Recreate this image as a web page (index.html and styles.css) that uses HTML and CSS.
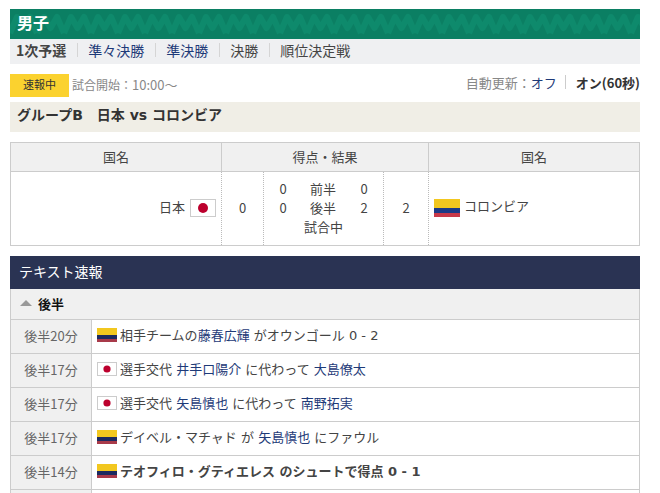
FILE: index.html
```html
<!DOCTYPE html>
<html>

<head>
    <title>男子</title>
    <meta charset='UTF-8'>
    <link rel="stylesheet" href="styles.css">
</head>

<body>
    <div class='page'>
        <h2 class='title'>男子</h2>
        <ul class='rounds'>
            <li class='current'>1次予選</li>
            <li><a>準々決勝</a></li>
            <li><a>準決勝</a></li>
            <li><a class='plain'>決勝</a></li>
            <li><a class='plain'>順位決定戦</a></li>
        </ul>
        <div class='status'>
            <span class='live'>速報中</span>
            <span class='start'>試合開始：<span class='time'>10:00～</span></span>
            <span class='refresh'>自動更新：<a>オフ</a><i class='sep'></i><b>オン(60秒)</b></span>
        </div>
        <div class='group'>グループB　日本 vs コロンビア</div>

        <table class='score'>
            <colgroup>
                <col class='c-team'>
                <col class='c-total'>
                <col class='c-halves'>
                <col class='c-total2'>
                <col>
            </colgroup>
            <tr>
                <th>国名</th>
                <th colspan='3'>得点・結果</th>
                <th>国名</th>
            </tr>
            <tr>
                <td class='home'>日本<svg class='flag jp' viewBox='0 0 26 18'><rect x='.5' y='.5' width='25' height='17' fill='#fff' stroke='#ccc'/><circle cx='13' cy='9' r='5' fill='#bc002d'/></svg></td>
                <td>0</td>
                <td>
                    <div class='half'><span>0</span><span>前半</span><span>0</span></div>
                    <div class='half'><span>0</span><span>後半</span><span>2</span></div>
                    <div>試合中</div>
                </td>
                <td>2</td>
                <td class='away'><svg class='flag' viewBox='0 0 26 18'><rect width='26' height='9' fill='#f2c71f'/><rect y='9' width='26' height='5' fill='#1c3a87'/><rect y='14' width='26' height='4' fill='#c8394a'/></svg>コロンビア</td>
            </tr>
        </table>

        <h3 class='bar'>テキスト速報</h3>
        <div class='section'><i class='arrow'></i>後半</div>
        <table class='log'>
            <tr>
                <th>後半20分</th>
                <td><svg class='flag small' viewBox='0 0 20 14'><rect width='20' height='7' fill='#f2c71f'/><rect y='7' width='20' height='4' fill='#1c2a60'/><rect y='11' width='20' height='3' fill='#a83a4a'/></svg>相手チームの<a>藤春広輝</a> がオウンゴール 0 - 2</td>
            </tr>
            <tr>
                <th>後半17分</th>
                <td><svg class='flag small' viewBox='0 0 20 14'><rect x='.5' y='.5' width='19' height='13' fill='#fff' stroke='#ccc'/><circle cx='10' cy='7' r='3.6' fill='#bc002d'/></svg>選手交代 <a>井手口陽介</a> に代わって <a>大島僚太</a></td>
            </tr>
            <tr>
                <th>後半17分</th>
                <td><svg class='flag small' viewBox='0 0 20 14'><rect x='.5' y='.5' width='19' height='13' fill='#fff' stroke='#ccc'/><circle cx='10' cy='7' r='3.6' fill='#bc002d'/></svg>選手交代 <a>矢島慎也</a> に代わって <a>南野拓実</a></td>
            </tr>
            <tr>
                <th>後半17分</th>
                <td><svg class='flag small' viewBox='0 0 20 14'><rect width='20' height='7' fill='#f2c71f'/><rect y='7' width='20' height='4' fill='#1c2a60'/><rect y='11' width='20' height='3' fill='#a83a4a'/></svg>デイベル・マチャド が <a>矢島慎也</a> にファウル</td>
            </tr>
            <tr>
                <th>後半14分</th>
                <td class='goal'><svg class='flag small' viewBox='0 0 20 14'><rect width='20' height='7' fill='#f2c71f'/><rect y='7' width='20' height='4' fill='#1c2a60'/><rect y='11' width='20' height='3' fill='#a83a4a'/></svg>テオフィロ・グティエレス のシュートで得点 0 - 1</td>
            </tr>
            <tr>
                <th>&nbsp;</th>
                <td>&nbsp;</td>
            </tr>
        </table>
    </div>
</body>

</html>
```

FILE: styles.css
```css
html, body {
    margin: 0;
    padding: 0;
    background-color: #fff;
}

.page {
    width: 630px;
    height: 484px;
    margin-left: 10px;
    padding-top: 9px;
    overflow: hidden;
    font-family: "Noto Sans CJK JP", sans-serif;
    font-size: 13px;
    color: #444;
}

a {
    color: #1e3a78;
}

.title {
    margin: 0;
    height: 30px;
    padding-left: 7px;
    line-height: 27px;
    font-size: 16px;
    font-weight: bold;
    color: #fff;
    background-color: #0b7f63;
    background-image: url("data:image/svg+xml,%3Csvg xmlns='http://www.w3.org/2000/svg' width='27' height='30'%3E%3Cpath d='M0 24L7 8L13.5 19L20 8L27 24' fill='none' stroke='%230e8a6c' stroke-width='6' stroke-linejoin='round'/%3E%3C/svg%3E");
}

.rounds {
    display: flex;
    align-items: center;
    margin: 0;
    padding: 0 0 3px 6px;
    height: 22px;
    list-style: none;
    font-size: 14px;
    background-color: #eff0f2;
}

.rounds li {
    padding-right: 11px;
    margin-right: 10px;
    line-height: 14px;
    border-right: 1px solid #d5d5d5;
}

.rounds li:last-child {
    border-right: 0;
}

.rounds .current {
    font-weight: bold;
}

.rounds .plain {
    color: #444;
}

.status {
    display: flex;
    align-items: center;
    height: 23px;
    margin-top: 10px;
    font-size: 12px;
}

.live {
    width: 59px;
    height: 23px;
    margin-right: 3px;
    line-height: 21px;
    text-align: center;
    font-size: 11px;
    color: #333;
    background-color: #fbd22f;
}

.start {
    margin-top: -2px;
    color: #888;
}

.time {
    font-size: 13px;
}

.refresh {
    display: flex;
    align-items: center;
    margin-left: auto;
    margin-top: -7px;
    font-size: 13px;
    color: #888;
}

.refresh b {
    color: #333;
}

.sep {
    width: 1px;
    height: 14px;
    margin: 0 10px 0 8px;
    background-color: #ccc;
}

.group {
    height: 30px;
    margin-top: 5px;
    padding-left: 7px;
    line-height: 26px;
    font-family: "DejaVu Sans", "Noto Sans CJK JP", sans-serif;
    font-size: 14px;
    font-weight: bold;
    color: #333;
    background-color: #f0eee6;
}

.score {
    width: 630px;
    height: 104px;
    margin-top: 10px;
    border-collapse: collapse;
    table-layout: fixed;
    border: 1px solid #ccc;
}

.c-team {
    width: 211px;
}

.c-total {
    width: 42px;
}

.c-halves {
    width: 120px;
}

.c-total2 {
    width: 45px;
}

.score th {
    height: 26px;
    padding: 0 0 2px;
    font-weight: normal;
    background-color: #f0f0f0;
    border: 1px solid #ccc;
}

.score td {
    padding: 0 0 3px;
    text-align: center;
    line-height: 19px;
    border-left: 1px dotted #bbb;
}

.score .home {
    padding-right: 5px;
    text-align: right;
    border-left: 0;
}

.score .away {
    padding: 0 0 4px 5px;
    text-align: left;
}

.half {
    display: grid;
    grid-template-columns: 38px 42px 40px;
}

.flag {
    width: 26px;
    height: 18px;
    vertical-align: middle;
}

.jp {
    margin-left: 5px;
}

.away .flag {
    margin-right: 4px;
}

.flag.small {
    width: 20px;
    height: 14px;
    margin: 0 3px 0 0;
    vertical-align: -2px;
}

.bar {
    margin: 10px 0 0;
    height: 33px;
    padding-left: 9px;
    line-height: 30px;
    font-size: 14px;
    font-weight: normal;
    color: #fff;
    background-color: #2a3353;
}

.section {
    display: flex;
    align-items: center;
    height: 28px;
    padding-bottom: 2px;
    font-weight: bold;
    color: #111;
    background-color: #f0f0f0;
    border: 1px solid #ccc;
    border-top: 0;
}

.arrow {
    width: 0;
    height: 0;
    margin: 0 6px 0 9px;
    border-left: 6px solid transparent;
    border-right: 6px solid transparent;
    border-bottom: 6px solid #999;
}

.log {
    width: 630px;
    border-collapse: collapse;
    table-layout: fixed;
}

.log th {
    width: 80px;
    height: 31px;
    padding: 0 0 2px;
    font-weight: normal;
    color: #666;
    background-color: #f0f0f0;
    border: 1px solid #ccc;
    border-top: 0;
}

.log td {
    padding: 0 0 2px 5px;
    line-height: 18px;
    font-family: "DejaVu Sans", "Noto Sans CJK JP", sans-serif;
    border: 1px solid #ccc;
    border-top: 0;
}

.log .goal {
    font-weight: bold;
}
```
